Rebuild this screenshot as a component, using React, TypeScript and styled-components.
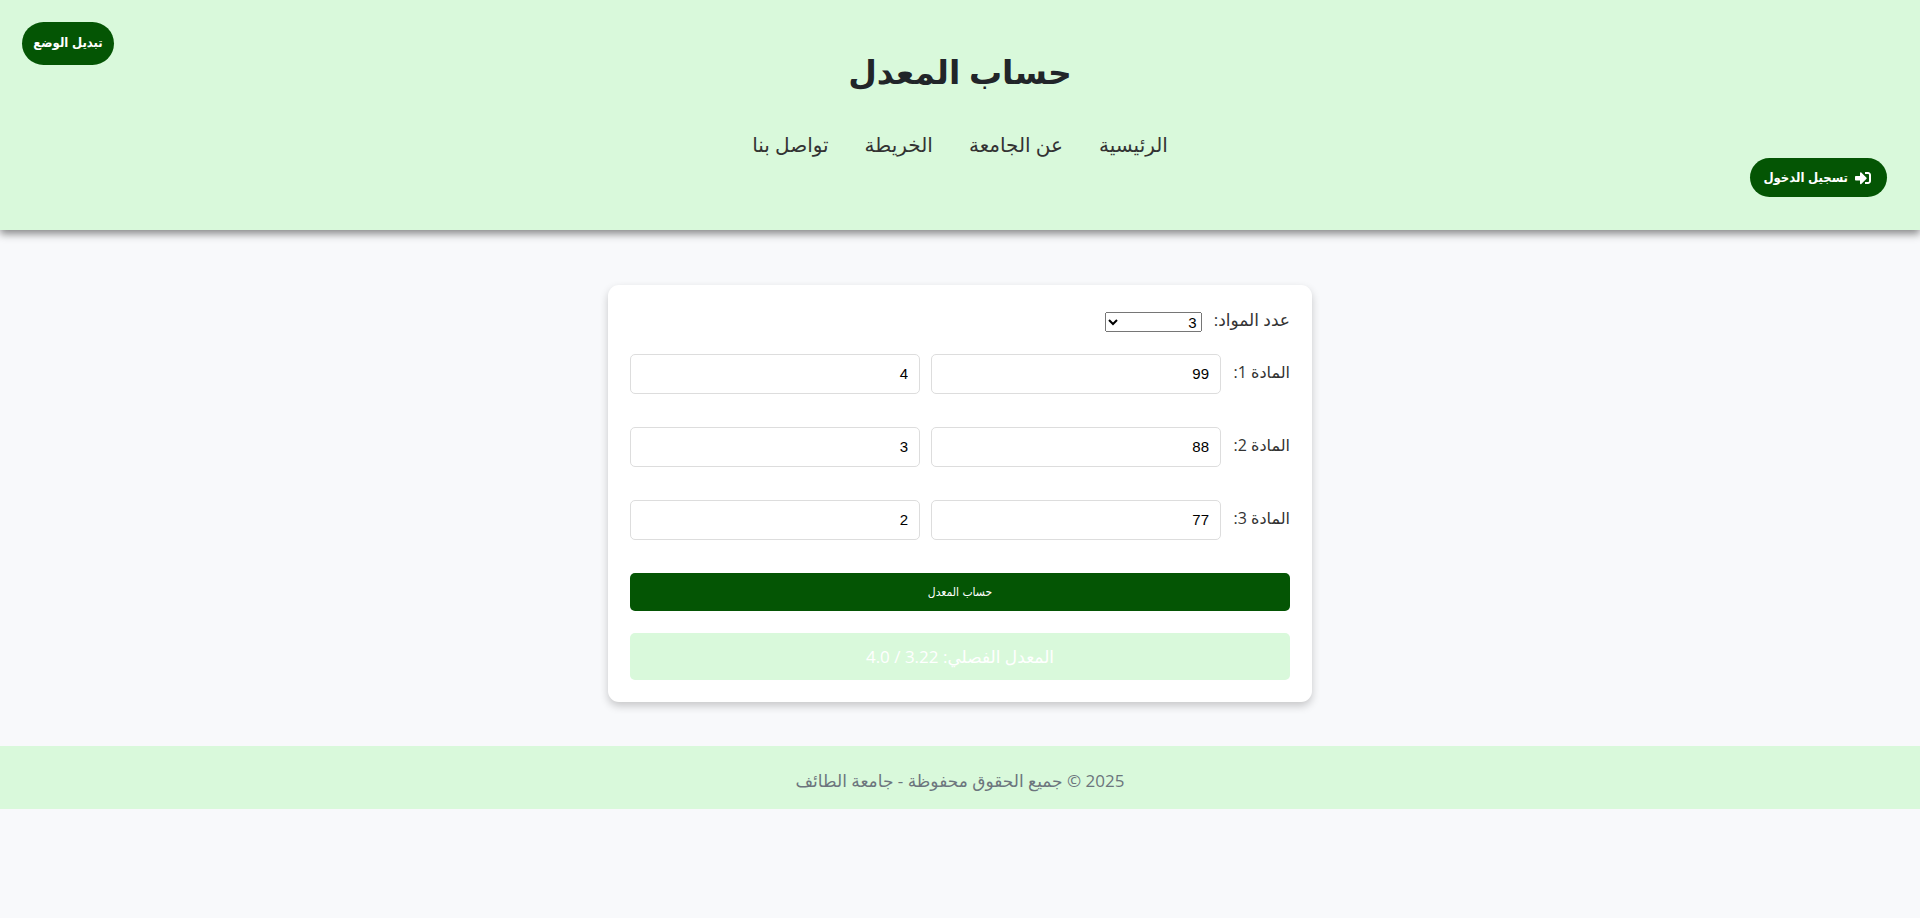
import React, { useState } from "react";
import styled, { createGlobalStyle } from "styled-components";
import { FaSignInAlt } from "react-icons/fa";

const colors = {
  mint: "#d9f9db",
  green: "#045504",
  page: "#f8f9fb",
  text: "#212529",
  label: "#333333",
  muted: "#6c757d",
  border: "#dddddd",
};

const bodyFont = `"Open Sans", "DejaVu Sans", sans-serif`;
const controlFont = `"Liberation Sans", "DejaVu Sans Condensed", "DejaVu Sans", sans-serif`;

const GlobalStyle = createGlobalStyle`
  *, *::before, *::after { box-sizing: border-box; }
  body {
    margin: 0;
    background: ${colors.page};
    color: ${colors.text};
    font-family: ${bodyFont};
    font-size: 16px;
  }
`;

const Page = styled.div`
  position: relative;
`;

const Header = styled.header`
  display: flex;
  flex-direction: column;
  padding: 33px;
  background: ${colors.mint};
  box-shadow: 0 4px 8px rgba(0, 0, 0, 0.45);
`;

const Title = styled.h1`
  margin: 11px 0 33px;
  font-size: 33px;
  line-height: 55px;
  font-weight: 700;
  text-align: center;
`;

const Nav = styled.nav`
  display: flex;
  justify-content: center;
  gap: 36px;
`;

const NavLink = styled.a`
  color: ${colors.label};
  font-size: 20px;
  line-height: 26px;
  text-decoration: none;
`;

const PillButton = styled.button`
  display: flex;
  align-items: center;
  justify-content: center;
  gap: 7px;
  padding: 0 0 2px;
  border: 0;
  border-radius: 22px;
  background: ${colors.green};
  color: #fff;
  font-family: ${controlFont};
  font-weight: 700;
  font-size: 13px;
  cursor: pointer;
  white-space: nowrap;

  svg {
    flex-shrink: 0;
  }
`;

const ThemeToggle = styled(PillButton)`
  position: absolute;
  top: 22px;
  left: 22px;
  width: 92px;
  height: 43px;
`;

const LoginButton = styled(PillButton)`
  align-self: flex-start;
  justify-content: flex-start;
  width: 137px;
  height: 39px;
  padding: 0 16px 0 13px;
`;

const Card = styled.form`
  display: flex;
  flex-direction: column;
  gap: 22px;
  width: 100%;
  max-width: 704px;
  margin: 55px auto 44px;
  padding: 22px;
  border-radius: 11px;
  background: #fff;
  box-shadow: 0 4px 8px rgba(0, 0, 0, 0.2);
`;

const CountRow = styled.div`
  display: flex;
  align-items: flex-end;
  gap: 12px;
  height: 25px;
`;

const Label = styled.label`
  min-width: 58px;
  color: ${colors.label};
  white-space: nowrap;
`;

const CountLabel = styled(Label)`
  font-size: 17px;
  line-height: 24px;
`;

const CourseLabel = styled(Label)`
  padding-bottom: 4px;
  font-size: 16px;
  line-height: 20px;
`;

const CountSelect = styled.select`
  width: 97px;
  height: 20px;
  padding: 0;
  font-family: ${controlFont};
  font-size: 15px;
`;

const Courses = styled.div`
  display: flex;
  flex-direction: column;
  gap: 33px;
  padding-bottom: 11px;
`;

const CourseRow = styled.div`
  display: flex;
  align-items: center;
  gap: 11px;
`;

const NumberInput = styled.input`
  flex: 1;
  min-width: 0;
  height: 40px;
  padding: 0 11px 2px;
  border: 1px solid ${colors.border};
  border-radius: 5px;
  background: #fff;
  color: #000;
  font-family: ${controlFont};
  font-size: 15px;
  text-align: right;
`;

const Submit = styled.button`
  height: 38px;
  border: 0;
  border-radius: 5px;
  background: ${colors.green};
  color: #fff;
  font-family: ${controlFont};
  font-size: 12px;
  cursor: pointer;
`;

const Result = styled.output`
  display: block;
  padding: 11px;
  border-radius: 5px;
  background: ${colors.mint};
  color: #fff;
  font-size: 17px;
  line-height: 25px;
  text-align: center;
`;

const Footer = styled.footer`
  padding: 20px 22px 13px;
  background: ${colors.mint};
  color: ${colors.muted};
  font-size: 17px;
  line-height: 30px;
  text-align: center;
`;

const links = ["الرئيسية", "عن الجامعة", "الخريطة", "تواصل بنا"];

const initialCourses = [
  { grade: "99", hours: "4" },
  { grade: "88", hours: "3" },
  { grade: "77", hours: "2" },
];

export default function App() {
  const [courses, setCourses] = useState(initialCourses);

  const update = (index: number, key: "grade" | "hours", value: string) =>
    setCourses(courses.map((c, i) => (i === index ? { ...c, [key]: value } : c)));

  const resize = (count: number) =>
    setCourses(Array.from({ length: count }, (_, i) => courses[i] ?? { grade: "", hours: "" }));

  return (
    <Page dir="rtl" lang="ar">
      <GlobalStyle />
      <Header>
        <Title>حساب المعدل</Title>
        <Nav>
          {links.map((link) => (
            <NavLink key={link} href="#">{link}</NavLink>
          ))}
        </Nav>
        <LoginButton type="button">
          <FaSignInAlt size={16} aria-hidden />
          تسجيل الدخول
        </LoginButton>
      </Header>
      <ThemeToggle type="button">تبديل الوضع</ThemeToggle>
      <main>
        <Card onSubmit={(e) => e.preventDefault()}>
          <CountRow>
            <CountLabel htmlFor="count">عدد المواد:</CountLabel>
            <CountSelect
              id="count"
              value={courses.length}
              onChange={(e) => resize(Number(e.target.value))}
            >
              {[1, 2, 3, 4, 5, 6, 7, 8].map((n) => (
                <option key={n} value={n}>{n}</option>
              ))}
            </CountSelect>
          </CountRow>
          <Courses>
            {courses.map((course, i) => (
              <CourseRow key={i}>
                <CourseLabel htmlFor={`grade-${i}`}>{`المادة ${i + 1}:`}</CourseLabel>
                <NumberInput
                  id={`grade-${i}`}
                  inputMode="numeric"
                  value={course.grade}
                  onChange={(e) => update(i, "grade", e.target.value)}
                />
                <NumberInput
                  aria-label="عدد الساعات"
                  inputMode="numeric"
                  value={course.hours}
                  onChange={(e) => update(i, "hours", e.target.value)}
                />
              </CourseRow>
            ))}
          </Courses>
          <Submit type="submit">حساب المعدل</Submit>
          <Result>المعدل الفصلي: 3.22 / 4.0</Result>
        </Card>
      </main>
      <Footer>2025 © جميع الحقوق محفوظة - جامعة الطائف</Footer>
    </Page>
  );
}
